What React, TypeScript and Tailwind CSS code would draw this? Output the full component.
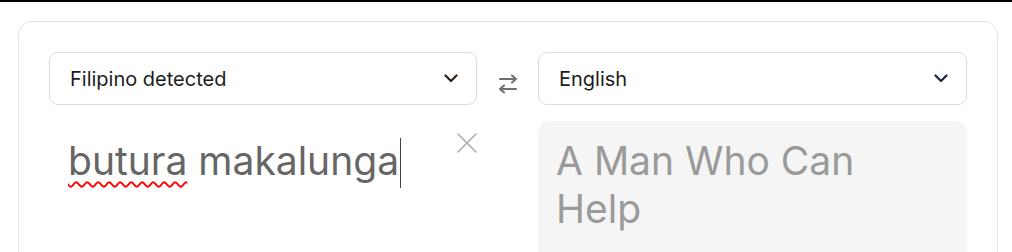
import React from 'react';

const font = { fontFamily: 'Inter, "Liberation Sans", sans-serif' };

function Chevron({ color }: { color: string }) {
  return (
    <svg width="14" height="9" viewBox="0 0 14 9" fill="none">
      <path d="M1.5 1.5L7 7L12.5 1.5" stroke={color} strokeWidth="2.2" strokeLinecap="round" strokeLinejoin="round" />
    </svg>
  );
}

function SwapIcon() {
  return (
    <svg width="20" height="20" viewBox="0 0 20 20" fill="none" stroke="#6f6f6f" strokeWidth="2" strokeLinecap="round" strokeLinejoin="round">
      <path d="M2 5H18M14 1.5L18 5L14 8.5" />
      <path d="M18 15H2M6 11.5L2 15L6 18.5" />
    </svg>
  );
}

function CloseIcon() {
  return (
    <svg width="20" height="20" viewBox="0 0 20 20" fill="none" stroke="#a9a9a9" strokeWidth="1.6" strokeLinecap="round">
      <path d="M1 1L19 19M19 1L1 19" />
    </svg>
  );
}

function LangSelect({ label, chevron }: { label: string; chevron: string }) {
  return (
    <div className="flex h-[53px] items-center justify-between rounded-[9px] border border-[#dcdcdc] bg-white pl-[20px] pr-[18px]">
      <span className="pt-[1px] text-[20px] text-[#1c1c1c]">{label}</span>
      <Chevron color={chevron} />
    </div>
  );
}

export default function App() {
  return (
    <div className="h-[252px] overflow-hidden bg-white" style={font}>
      <div className="h-[2px] bg-black" />
      <div className="px-[18px] pt-[19px]">
        <div className="h-[260px] w-[980px] rounded-[14px] border border-[#e3e3e3] bg-white px-[30px] pt-[30px]">
          <div className="grid grid-cols-[428px_61px_429px]">
            <LangSelect label="Filipino detected" chevron="#2a1f14" />
            <div className="flex justify-center pl-[1px] pt-[22px]">
              <SwapIcon />
            </div>
            <LangSelect label="English" chevron="#132640" />
          </div>

          <div className="mt-[16px] grid grid-cols-[428px_61px_429px]">
            <div className="flex items-start justify-between pl-[19px]">
              <div className="pt-[16px] text-[39px] leading-[48px] text-[#666666]">
                <span className="underline decoration-[#ff0000] decoration-wavy decoration-[1.5px] underline-offset-[6px]">butura</span>
                <span> makalunga</span>
                <span className="relative">
                  <span className="absolute left-[1px] top-[1px] h-[50px] w-px bg-[#444444]" />
                </span>
              </div>
              <div className="pt-[12px]">
                <CloseIcon />
              </div>
            </div>
            <div />
            <div className="h-[200px] rounded-[12px] bg-[#f5f5f5] px-[18px] pt-[16px]">
              <p className="text-[39px] leading-[48px] text-[#9a9a9a]">
                A Man Who Can
                <br />
                Help
              </p>
            </div>
          </div>
        </div>
      </div>
    </div>
  );
}
